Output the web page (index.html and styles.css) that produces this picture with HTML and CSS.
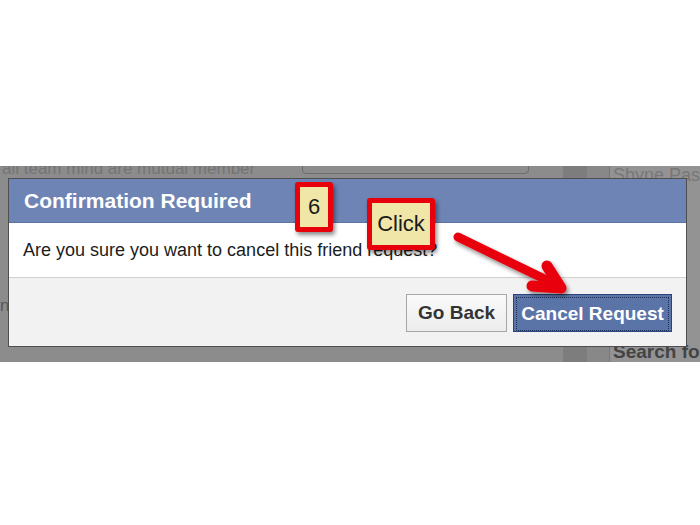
FILE: index.html
```html
<!DOCTYPE html>
<html lang="en">
<head>
    <meta charset="UTF-8">
    <meta name="viewport" content="width=device-width, initial-scale=1.0">
    <title>Cancel Friend Request</title>
    <link rel="stylesheet" href="styles.css">
</head>
<body>
    <div class="shot">
        <div class="backdrop">
            <div class="page-main">
                <div class="top-row">
                    <span class="ghost-text">all team mind are mutual member</span>
                    <span class="ghost-input"></span>
                </div>
                <span class="ghost-side">n|</span>
            </div>
            <div class="page-rail"></div>
            <div class="page-rail light"></div>
            <div class="page-side">
                <span class="ghost-name">Shyne Pas</span>
                <span class="ghost-search">Search fo</span>
            </div>
        </div>

        <div class="dialog">
            <div class="dialog-header">Confirmation Required</div>
            <div class="dialog-body">Are you sure you want to cancel this friend request?</div>
            <div class="dialog-footer">
                <button class="btn btn-back">Go Back</button>
                <button class="btn btn-confirm"><span>Cancel Request</span></button>
            </div>
        </div>

        <div class="step step-num">6</div>
        <div class="step step-click">Click</div>

        <svg class="arrow" width="700" height="196" viewBox="0 0 700 196">
            <defs>
                <filter id="shadow" x="-20%" y="-20%" width="140%" height="140%">
                    <feDropShadow dx="2" dy="3" stdDeviation="2" flood-color="#000" flood-opacity="0.45"/>
                </filter>
            </defs>
            <g filter="url(#shadow)" stroke="#e80010" stroke-width="9" stroke-linecap="round" stroke-linejoin="round" fill="none">
                <path d="M458 71 L557 119"/>
                <path d="M532 120 L561 122 L547 100" stroke-width="11"/>
            </g>
        </svg>
    </div>
</body>
</html>
```

FILE: styles.css
```css
body {
    margin: 0;
    font-family: "Liberation Sans", Arial, sans-serif;
    background-color: #ffffff;
}

.shot {
    margin-top: 166px;
    height: 196px;
    display: grid;
    position: relative;
    overflow: hidden;
    background-color: #8c8c8c;
}

/* fondo */
.backdrop {
    grid-area: 1 / 1;
    display: flex;
}

.page-main {
    width: 563px;
    display: flex;
    flex-direction: column;
}

.top-row {
    display: flex;
    align-items: flex-end;
    height: 8px;
    overflow: hidden;
}

.ghost-text {
    margin-left: 2px;
    font-size: 17px;
    line-height: 17px;
    margin-bottom: -3px;
    color: #747474;
    width: 300px;
    white-space: nowrap;
}

.ghost-input {
    width: 225px;
    height: 20px;
    border: 1px solid #6c6c6c;
    border-radius: 4px;
}

.ghost-side {
    margin-top: 122px;
    font-size: 17px;
    color: #5a5a5a;
}

.page-rail {
    width: 24px;
    background-color: #7d7d7d;
}

.page-rail.light {
    width: 22px;
    background-color: #888;
    border-right: 1px solid #777;
}

.page-side {
    flex: 1;
    background-color: #939393;
    display: flex;
    flex-direction: column;
    justify-content: space-between;
    padding-left: 3px;
}

.ghost-name {
    font-size: 18px;
    color: #777;
    margin-top: -1px;
    white-space: nowrap;
}

.ghost-search {
    font-size: 19px;
    font-weight: bold;
    color: #444;
    white-space: nowrap;
    margin-bottom: -1px;
}

/* diálogo */
.dialog {
    grid-area: 1 / 1;
    align-self: start;
    margin: 12px 13px 0 8px;
    border: 1px solid #4f4f4f;
    background-color: #ffffff;
    position: relative;
}

.dialog-header {
    background-color: #6d84b4;
    border-bottom: 1px solid #5c74a6;
    color: #ffffff;
    font-weight: bold;
    font-size: 21px;
    height: 43px;
    line-height: 43px;
    padding-left: 15px;
}

.dialog-body {
    height: 54px;
    line-height: 54px;
    padding-left: 14px;
    font-size: 18px;
    color: #1c1c1c;
    border-bottom: 1px solid #cfcfcf;
}

.dialog-footer {
    background-color: #f2f2f2;
    display: flex;
    justify-content: flex-end;
    gap: 6px;
    padding: 16px 14px 14px;
}

.btn {
    height: 38px;
    font-family: "Liberation Sans", Arial, sans-serif;
    font-weight: bold;
    font-size: 19px;
    padding: 0 10px;
    cursor: pointer;
}

.btn-back {
    width: 101px;
    background: linear-gradient(#fafafa, #ececec);
    border: 1px solid #a6a6a6;
    color: #333;
}

.btn-confirm {
    width: 159px;
    background-color: #5b74a8;
    border: 1px solid #29447e;
    color: #ffffff;
    padding: 2px;
}

.btn-confirm span {
    display: flex;
    align-items: center;
    justify-content: center;
    height: 100%;
    border: 1px dotted #1f2f55;
}

/* anotaciones */
.step {
    position: absolute;
    box-sizing: border-box;
    border: 5px solid #e8000b;
    border-radius: 3px;
    background-color: #efe6a8;
    color: #1a1a1a;
    font-size: 22px;
    display: flex;
    align-items: center;
    justify-content: center;
    box-shadow: 2px 3px 4px rgba(0, 0, 0, 0.45);
}

.step-num {
    left: 295px;
    top: 16px;
    width: 38px;
    height: 50px;
}

.step-click {
    left: 367px;
    top: 32px;
    width: 68px;
    height: 52px;
}

.arrow {
    position: absolute;
    left: 0;
    top: 0;
    pointer-events: none;
}
```
